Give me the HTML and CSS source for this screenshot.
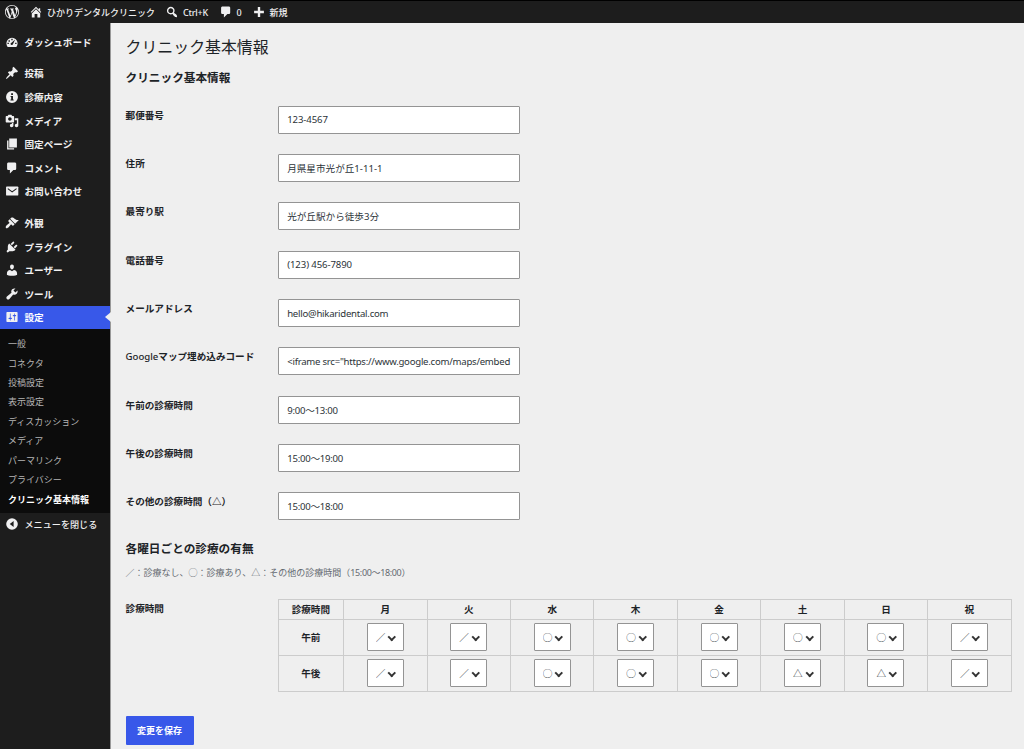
FILE: index.html
```html
<!DOCTYPE html>
<html lang="ja">
<head>
    <meta charset="UTF-8">
    <meta name="viewport" content="width=device-width, initial-scale=1.0">
    <title>クリニック基本情報</title>
    <link rel="stylesheet" href="styles.css">
</head>
<body>
    <header class="adminbar">
        <a class="bar-item bar-logo"><svg class="icon" viewBox="0 0 20 20"><path d="M20 10c0-5.51-4.49-10-10-10C4.48 0 0 4.49 0 10c0 5.52 4.48 10 10 10 5.51 0 10-4.48 10-10zM7.78 15.37L4.37 6.22c.55-.02 1.17-.08 1.17-.08.5-.06.44-1.13-.06-1.11 0 0-1.45.11-2.37.11-.18 0-.37 0-.58-.01C4.12 2.69 6.87 1.11 10 1.11c2.33 0 4.45.87 6.05 2.34-.68-.11-1.65.39-1.65 1.58 0 .74.45 1.36.9 2.1.35.61.55 1.36.55 2.46 0 1.49-1.4 5-1.4 5l-3.03-8.37c.54-.02.82-.17.82-.17.5-.05.44-1.25-.06-1.22 0 0-1.44.12-2.38.12-.87 0-2.33-.12-2.33-.12-.5-.03-.56 1.2-.06 1.22l.92.08 1.26 3.41zM17.41 10c.24-.64.74-1.87.43-4.25.7 1.29 1.05 2.71 1.05 4.25 0 3.29-1.73 6.24-4.4 7.78.97-2.59 1.94-5.2 2.92-7.78zM6.1 18.09C3.12 16.65 1.11 13.53 1.11 10c0-1.3.23-2.48.72-3.59C3.25 10.3 4.67 14.2 6.1 18.09zm4.03-6.63l2.58 6.98c-.86.29-1.76.45-2.71.45-.79 0-1.57-.11-2.29-.33.81-2.38 1.62-4.74 2.42-7.1z"/></svg></a>
        <a class="bar-item bar-site"><svg class="icon" viewBox="0 0 20 20"><path d="M16 8.5l1.53 1.53-1.06 1.06L10 4.6l-6.47 6.49-1.06-1.06L10 2.5l4 4v-2h2v4zm-6-2.46l6 5.99V18h-4v-5H8v5H4v-5.97z"/></svg>ひかりデンタルクリニック</a>
        <a class="bar-item bar-search"><svg class="icon" viewBox="0 0 20 20"><path d="M12.14 4.18c1.87 1.87 2.11 4.75.72 6.89.12.1.22.21.36.31.2.16.47.36.81.59.34.24.56.39.66.47.42.31.73.57.94.78.32.32.6.65.84 1 .25.35.44.69.59 1.04.14.35.21.68.18 1-.02.32-.14.59-.36.81s-.49.34-.81.36c-.31.02-.65-.04-.99-.19-.35-.14-.7-.34-1.04-.59-.35-.24-.68-.52-1-.84-.21-.21-.47-.52-.77-.93-.1-.13-.25-.35-.47-.66-.22-.32-.4-.57-.56-.78-.16-.2-.29-.35-.44-.5-2.07 1.09-4.69.76-6.44-.98-2.14-2.15-2.14-5.64 0-7.78 2.15-2.15 5.63-2.15 7.78 0zm-1.41 6.36c1.36-1.37 1.36-3.58 0-4.95-1.37-1.37-3.59-1.37-4.95 0-1.37 1.37-1.37 3.58 0 4.95 1.36 1.37 3.58 1.37 4.95 0z"/></svg>Ctrl+K</a>
        <a class="bar-item bar-comments"><svg class="icon" viewBox="0 0 20 20"><path d="M5 2h9c1.1 0 2 .9 2 2v7c0 1.1-.9 2-2 2h-2l-5 5v-5H5c-1.1 0-2-.9-2-2V4c0-1.1.9-2 2-2z"/></svg>0</a>
        <a class="bar-item bar-new"><svg class="icon" viewBox="0 0 20 20"><path d="M17 8.3v3.400h-5.300V17H8.300v-5.300H3V8.300h5.300V3h3.400v5.300z"/></svg>新規</a>
    </header>

    <div class="layout">
        <nav class="sidebar">
            <ul class="menu">
                <li class="menu-item"><svg class="icon" viewBox="0 0 20 20"><path fill-rule="evenodd" d="M3.76 17h12.48A8 8 0 1 0 3.760 17zM9 5.500h2v2H9zM5 7.500h2v2H5zM3.500 11h2v2h-2zM14.500 11h2v2h-2zM14.500 6.500l-3 6.500a1.800 1.800 0 1 1-2.300-2.100z"/></svg>ダッシュボード</li>
                <li class="menu-item gap"><svg class="icon" viewBox="0 0 20 20"><path d="M10.44 3.02l1.82-1.82 6.36 6.35-1.83 1.82c-1.05-.68-2.48-.57-3.41.36l-.75.75c-.92.93-1.04 2.35-.35 3.41l-1.83 1.82-2.41-2.41-2.8 2.79c-.42.42-3.38 2.71-3.8 2.29s1.86-3.39 2.28-3.81l2.79-2.79L4.1 9.36l1.83-1.82c1.05.69 2.48.57 3.4-.36l.75-.75c.93-.92 1.05-2.35.36-3.41z"/></svg>投稿</li>
                <li class="menu-item"><svg class="icon" viewBox="0 0 20 20"><path fill-rule="evenodd" d="M10 1.500a8.500 8.500 0 1 0 0 17 8.500 8.500 0 0 0 0-17zM8.800 4.500h2.600v2.500H8.800zM8 8.500h3.400v5h1V15H7.800v-1.500h1V10H8z"/></svg>診療内容</li>
                <li class="menu-item"><svg class="icon" viewBox="0 0 20 20"><path d="M13 11V4c0-.55-.45-1-1-1h-1.67L9 1H5L3.67 3H2c-.55 0-1 .45-1 1v7c0 .55.45 1 1 1h10c.55 0 1-.45 1-1zM7 4.500c1.380 0 2.500 1.120 2.500 2.500S8.380 9.500 7 9.500 4.500 8.380 4.500 7 5.620 4.500 7 4.500zM14 6h5v10.500c0 1.380-1.120 2.500-2.500 2.500S14 17.880 14 16.500s1.120-2.500 2.500-2.500c.17 0 .34.02.5.05V9h-3V6zm-4 8.050V13h2v3.500c0 1.380-1.120 2.500-2.500 2.500S7 17.880 7 16.500 8.120 14 9.500 14c.17 0 .34.02.5.05z"/></svg>メディア</li>
                <li class="menu-item"><svg class="icon" viewBox="0 0 20 20"><path d="M6 15V2h11v13H6zm-1 1h8v2H3V5h2v11z"/></svg>固定ページ</li>
                <li class="menu-item"><svg class="icon" viewBox="0 0 20 20"><path d="M5 2h9c1.1 0 2 .9 2 2v7c0 1.1-.9 2-2 2h-2l-5 5v-5H5c-1.1 0-2-.9-2-2V4c0-1.1.9-2 2-2z"/></svg>コメント</li>
                <li class="menu-item"><svg class="icon" viewBox="0 0 20 20"><rect x="1.500" y="3.500" width="17.500" height="13" rx="1.200"/><path class="flap" d="M4 6.500l6.200 4.800 6.300-4.800"/></svg>お問い合わせ</li>
                <li class="menu-item gap"><svg class="icon" viewBox="0 0 20 20"><path d="M14.48 11.06L7.41 3.99l1.5-1.5c.5-.56 2.3-.47 3.51.32 1.21.8 1.43 1.28 2.91 2.1 1.18.64 2.45 1.26 4.45.85zm-.71.71L6.7 4.7 4.93 6.47c-.39.39-.39 1.02 0 1.41l1.06 1.06c.39.39.39 1.03 0 1.42-.6.6-1.43 1.11-2.21 1.69-.35.26-.7.53-1.01.84C1.43 14.23.4 16.08 1.4 17.07c.99 1 2.84-.03 4.18-1.36.31-.31.58-.66.85-1.02.57-.78 1.08-1.61 1.69-2.21.39-.39 1.02-.39 1.41 0l1.06 1.06c.39.39 1.02.39 1.41 0z"/></svg>外観</li>
                <li class="menu-item"><svg class="icon" viewBox="0 0 20 20"><path d="M13.11 4.36L9.87 7.6 8 5.73l3.24-3.24c.35-.34 1.05-.2 1.56.32.52.51.66 1.21.31 1.55zm-8 1.77l.91-1.12 9.01 9.01-1.19.84c-.71.71-2.63 1.16-3.82 1.16H6.14L4.9 17.26c-.59.59-1.54.59-2.12 0-.59-.58-.59-1.53 0-2.12l1.24-1.24v-3.88c0-1.13.4-3.19 1.09-3.89zm7.26 3.97l3.24-3.24c.34-.35 1.04-.21 1.55.31.52.51.66 1.21.31 1.55l-3.24 3.25z"/></svg>プラグイン</li>
                <li class="menu-item"><svg class="icon" viewBox="0 0 20 20"><path d="M10 9.25c-2.27 0-2.73-3.44-2.73-3.44C7 4.02 7.82 2 9.97 2c2.16 0 2.98 2.02 2.71 3.81 0 0-.41 3.44-2.68 3.44zm0 2.57L12.72 10c2.39 0 4.52 2.33 4.52 4.53v2.49s-3.65 1.13-7.24 1.13c-3.65 0-7.24-1.13-7.24-1.13v-2.49c0-2.25 1.94-4.48 4.47-4.48z"/></svg>ユーザー</li>
                <li class="menu-item"><svg class="icon" viewBox="0 0 20 20"><path d="M16.68 9.77c-1.34 1.34-3.3 1.67-4.95.99l-5.41 6.52c-.99.99-2.59.99-3.58 0s-.99-2.59 0-3.57l6.52-5.42c-.68-1.65-.35-3.61.99-4.95 1.28-1.28 3.12-1.62 4.72-1.06l-2.89 2.89 2.82 2.82 2.86-2.87c.53 1.58.18 3.39-1.08 4.65z"/></svg>ツール</li>
                <li class="menu-item current"><svg class="icon" viewBox="0 0 20 20"><path d="M18 16V4c0-.55-.45-1-1-1H3c-.55 0-1 .45-1 1v12c0 .55.45 1 1 1h14c.55 0 1-.45 1-1zM8 11h1c.55 0 1 .45 1 1s-.45 1-1 1H8v1.5c0 .28-.22.5-.5.5s-.5-.22-.5-.5V13H6c-.55 0-1-.45-1-1s.45-1 1-1h1V5.5c0-.28.22-.5.5-.5s.5.22.5.5V11zm5-2h-1c-.55 0-1-.45-1-1s.45-1 1-1h1V5.5c0-.28.22-.5.5-.5s.5.22.5.5V7h1c.55 0 1 .45 1 1s-.45 1-1 1h-1v5.5c0 .28-.22.5-.5.5s-.5-.22-.5-.5V9z"/></svg>設定</li>
            </ul>
            <ul class="submenu">
                <li>一般</li>
                <li>コネクタ</li>
                <li>投稿設定</li>
                <li>表示設定</li>
                <li>ディスカッション</li>
                <li>メディア</li>
                <li>パーマリンク</li>
                <li>プライバシー</li>
                <li class="active">クリニック基本情報</li>
            </ul>
            <div class="menu-item collapse"><svg class="icon" viewBox="0 0 20 20"><path fill-rule="evenodd" d="M10 1.700a8.300 8.300 0 1 0 0 16.600 8.300 8.300 0 0 0 0-16.600zM12.300 5.800v8.400L6.800 10z"/></svg>メニューを閉じる</div>
        </nav>

        <main class="content">
            <h1>クリニック基本情報</h1>
            <form>
                <h2>クリニック基本情報</h2>
                <div class="form-row"><label for="zip">郵便番号</label><input type="text" id="zip" class="number" value="123-4567"></div>
                <div class="form-row"><label for="address">住所</label><input type="text" id="address" value="月県星市光が丘1-11-1"></div>
                <div class="form-row"><label for="station">最寄り駅</label><input type="text" id="station" value="光が丘駅から徒歩3分"></div>
                <div class="form-row"><label for="tel">電話番号</label><input type="text" id="tel" class="number" value="(123) 456-7890"></div>
                <div class="form-row"><label for="email">メールアドレス</label><input type="text" id="email" class="latin" value="hello@hikaridental.com"></div>
                <div class="form-row"><label for="map"><span class="google">Google</span>マップ埋め込みコード</label><input type="text" id="map" class="latin" value="&lt;iframe src=&quot;https://www.google.com/maps/embed"></div>
                <div class="form-row"><label for="am">午前の診療時間</label><input type="text" id="am" class="latin" value="9:00～13:00"></div>
                <div class="form-row"><label for="pm">午後の診療時間</label><input type="text" id="pm" class="latin" value="15:00～19:00"></div>
                <div class="form-row"><label for="other">その他の診療時間（△）</label><input type="text" id="other" class="latin" value="15:00～18:00"></div>

                <h2 class="hours-title">各曜日ごとの診療の有無</h2>
                <p class="description">／：診療なし、◯：診療あり、△：その他の診療時間（<span class="latin">15:00～18:00</span>）</p>
                <div class="form-row hours-row">
                    <label>診療時間</label>
                    <table class="hours">
                        <thead>
                            <tr><th class="time">診療時間</th><th>月</th><th>火</th><th>水</th><th>木</th><th>金</th><th>土</th><th>日</th><th>祝</th></tr>
                        </thead>
                        <tbody>
                            <tr>
                                <th>午前</th>
                                <td><span class="select"><select><option>／</option></select></span></td>
                                <td><span class="select"><select><option>／</option></select></span></td>
                                <td><span class="select"><select><option>◯</option></select></span></td>
                                <td><span class="select"><select><option>◯</option></select></span></td>
                                <td><span class="select"><select><option>◯</option></select></span></td>
                                <td><span class="select"><select><option>◯</option></select></span></td>
                                <td><span class="select"><select><option>◯</option></select></span></td>
                                <td><span class="select"><select><option>／</option></select></span></td>
                            </tr>
                            <tr>
                                <th>午後</th>
                                <td><span class="select"><select><option>／</option></select></span></td>
                                <td><span class="select"><select><option>／</option></select></span></td>
                                <td><span class="select"><select><option>◯</option></select></span></td>
                                <td><span class="select"><select><option>◯</option></select></span></td>
                                <td><span class="select"><select><option>◯</option></select></span></td>
                                <td><span class="select"><select><option>△</option></select></span></td>
                                <td><span class="select"><select><option>△</option></select></span></td>
                                <td><span class="select"><select><option>／</option></select></span></td>
                            </tr>
                        </tbody>
                    </table>
                </div>
                <button type="button" class="save">変更を保存</button>
            </form>
        </main>
    </div>
</body>
</html>
```
FILE: styles.css
```css
* {
    box-sizing: border-box;
}
body {
    margin: 0;
    height: 749px;
    overflow: hidden;
    display: flex;
    flex-direction: column;
    background: #efefef;
    color: #1d2327;
    font-family: "Noto Sans", "Noto Sans CJK JP", sans-serif;
    font-size: 9.6px;
}
ul {
    list-style: none;
    margin: 0;
    padding: 0;
}
.icon {
    width: 14px;
    height: 14px;
    fill: #f0f0f1;
    flex: none;
}
.flap {
    fill: none;
    stroke: #1d1d1d;
    stroke-width: 1.5;
}

/* admin bar */
.adminbar {
    height: 23px;
    flex: none;
    display: flex;
    background: #1d1d1d;
    border-top: 1px solid #000;
    color: #f0f0f1;
    font-size: 9px;
    font-weight: 500;
}
.bar-item {
    display: flex;
    align-items: center;
    gap: 4px;
    padding-left: 5px;
    white-space: nowrap;
}
.bar-logo {
    width: 24px;
}
.bar-site {
    width: 136px;
}
.bar-search {
    width: 53.5px;
    letter-spacing: -0.2px;
}
.bar-comments {
    width: 33px;
}

.layout {
    flex: 1;
    display: flex;
    min-height: 0;
}

/* sidebar */
.sidebar {
    width: 111px;
    flex: none;
    padding-top: 7px;
    background: #1d1d1d;
    border-right: 1px solid #999;
    color: #f0f0f1;
}
.menu-item {
    height: 23.6px;
    display: flex;
    align-items: center;
    gap: 5.5px;
    padding-left: 5px;
    font-weight: 600;
    white-space: nowrap;
}
.menu-item.gap {
    margin-top: 8px;
}
.menu-item.current {
    position: relative;
    background: #3858e9;
    color: #fff;
}
.menu-item.current::after {
    content: "";
    position: absolute;
    right: -1px;
    top: 6px;
    border: 5.5px solid transparent;
    border-left: 0;
    border-right: 6px solid #efefef;
}
.submenu {
    background: #0c0c0c;
    padding: 5px 0 3.5px;
    font-size: 9px;
    color: #b5b5b5;
}
.submenu li {
    height: 19.45px;
    line-height: 19.45px;
    padding-left: 8px;
    white-space: nowrap;
}
.submenu .active {
    color: #fff;
    font-weight: 700;
}
.menu-item.collapse {
    font-size: 9.1px;
    font-weight: 500;
}

/* content */
.content {
    flex: 1;
    min-width: 0;
    padding: 12.5px 12px 0 14.6px;
}
h1 {
    margin: 0;
    font-size: 15.9px;
    font-weight: 400;
    line-height: 22px;
}
h2 {
    margin: 11px 0 10px;
    font-size: 11.65px;
    font-weight: 600;
    line-height: 17px;
}
.form-row {
    height: 48.3px;
    display: flex;
    padding-top: 10.4px;
}
.form-row label {
    width: 152px;
    flex: none;
    padding-top: 3px;
    line-height: 13px;
    font-weight: 600;
    white-space: nowrap;
}
.form-row input {
    width: 242px;
    height: 28px;
    padding: 0 7px 0 8.6px;
    border: 1px solid #949494;
    border-radius: 1px;
    background: #fff;
    color: #2c3338;
    font: inherit;
}
.form-row input.number {
    letter-spacing: -0.1px;
}
.latin,
.form-row input.latin {
    letter-spacing: -0.25px;
}
.google {
    font-weight: 500;
}
.hours-title {
    margin: 9.5px 0 9px;
}
.description {
    margin: 0;
    font-size: 9px;
    line-height: 14px;
    color: #646970;
}
.description .latin {
    letter-spacing: -0.35px;
}
.form-row.hours-row {
    height: 136px;
    padding-top: 19px;
}
.hours {
    width: 734px;
    height: 93px;
    table-layout: fixed;
    border-collapse: collapse;
}
.hours th,
.hours td {
    height: 36px;
    padding: 0;
    border: 1px solid #ccc;
    text-align: center;
    font-weight: 600;
}
.hours thead th {
    height: 20px;
}
.hours .time {
    width: 65.5px;
}
.select {
    position: relative;
    display: block;
    width: 37px;
    height: 28px;
    margin: 0 auto;
}
.select::after {
    content: "";
    position: absolute;
    right: 9px;
    top: 11px;
    width: 3.5px;
    height: 3.5px;
    border-right: 2px solid #333;
    border-bottom: 2px solid #333;
    transform: rotate(45deg);
}
select {
    appearance: none;
    display: block;
    width: 37px;
    height: 28px;
    padding: 0 0 0 8px;
    border: 1px solid #949494;
    border-radius: 1px;
    background: #fff;
    color: #2c3338;
    font: inherit;
    font-weight: 400;
}
.save {
    width: 68px;
    height: 29px;
    padding: 0;
    border: 0;
    border-radius: 1px;
    background: #3858e9;
    color: #fff;
    font: inherit;
    font-size: 9px;
    font-weight: 600;
}
```
